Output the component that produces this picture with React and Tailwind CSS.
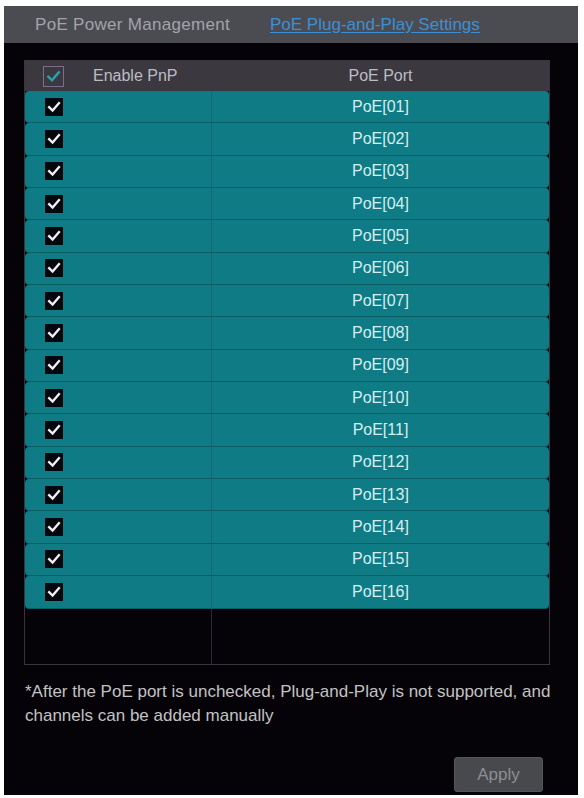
import React from 'react';

const ports = Array.from({ length: 16 }, (_, i) => `PoE[${String(i + 1).padStart(2, '0')}]`);

const Check = ({ className, stroke }) => (
  <svg viewBox="0 0 18 18" className={className} fill="none">
    <path d="M3.5 9.2 L7.4 13 L14.6 4.6" stroke={stroke} strokeWidth="2.6" strokeLinecap="square" />
  </svg>
);

const App = () => {
  return (
    <div className="w-[584px] h-[798px] bg-white pt-[6px] pl-[4px] font-['Liberation_Sans',Arial,sans-serif]">
      <div className="w-[574px] h-[789px] bg-[#050307] flex flex-col">
        {/* Tabs */}
        <div className="h-[37px] bg-[#4b4c51] flex items-center pl-[31px] text-[17px]">
          <span className="w-[235px] text-[#a3a3a9] tracking-[0.3px]">PoE Power Management</span>
          <span className="text-[#3b8fd6] underline underline-offset-2">PoE Plug-and-Play Settings</span>
        </div>

        {/* Table */}
        <div className="ml-[20px] mt-[17px] w-[526px] border border-[#38363c] flex flex-col">
          <div className="h-[30px] bg-[#3b383f] flex items-center text-[16px] text-[#bdbcc4]">
            <div className="w-[187px] flex items-center pl-[18px]">
              <div className="w-[21px] h-[21px] border border-[#7f6c87] flex items-center justify-center">
                <Check className="w-[17px] h-[17px]" stroke="#2aa1ab" />
              </div>
              <span className="ml-[29px]">Enable PnP</span>
            </div>
            <div className="flex-1 text-center">PoE Port</div>
          </div>

          {ports.map((p) => (
            <div
              key={p}
              className="h-[32.35px] bg-[#0f7b85] rounded-[4px] border-b border-[#0a5e67] flex items-stretch text-[16px] text-[#d6eef0]"
            >
              <div className="w-[187px] border-r border-[#0b6a73] flex items-center pl-[20px]">
                <div className="w-[18px] h-[18px] bg-[#05070c] flex items-center justify-center">
                  <Check className="w-[16px] h-[16px]" stroke="#eef0f2" />
                </div>
              </div>
              <div className="flex-1 flex items-center justify-center">{p}</div>
            </div>
          ))}

          <div className="h-[55px] flex">
            <div className="w-[187px] border-r border-[#2c2a30]"></div>
            <div className="flex-1"></div>
          </div>
        </div>

        {/* Note */}
        <p className="mt-[15px] pl-[21px] pr-[24px] text-[17px] leading-[24px] text-[#c2c2c4]">
          *After the PoE port is unchecked, Plug-and-Play is not supported, and channels can be added manually
        </p>

        {/* Footer */}
        <div className="mt-auto pb-[3px] pr-[35px] flex justify-end">
          <button className="w-[89px] h-[35px] rounded-[3px] bg-[#48494c] border border-[#55565a] text-[17px] text-[#8d8e92]">
            Apply
          </button>
        </div>
      </div>
    </div>
  );
};

export default App;
